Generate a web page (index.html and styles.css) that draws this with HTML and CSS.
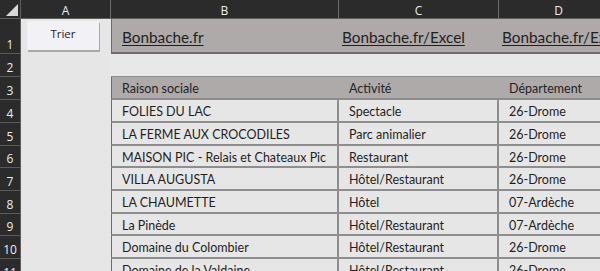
FILE: index.html
```html
<!DOCTYPE html>
<html lang="fr">
<head>
<meta charset="utf-8">
<title>Bonbache</title>
<link rel="stylesheet" href="styles.css">
</head>
<body>
<div class="sheet">
  <div class="corner"><span class="tri"></span></div>
  <div class="colhead">A</div>
  <div class="colhead">B</div>
  <div class="colhead">C</div>
  <div class="colhead">D</div>

  <div class="rowhead r1">1</div>
  <div class="cell-a r1"><button class="btn">Trier</button></div>
  <div class="link first"><span>Bonbache.fr</span></div>
  <div class="link"><span>Bonbache.fr/Excel</span></div>
  <div class="link last"><span>Bonbache.fr/Excel</span></div>

  <div class="rowhead">2</div>
  <div class="cell-a"></div>
  <div class="blank first"></div>
  <div class="blank"></div>
  <div class="blank"></div>

  <div class="rowhead">3</div>
  <div class="cell-a"></div>
  <div class="th first">Raison sociale</div>
  <div class="th">Activité</div>
  <div class="th">Département</div>

  <div class="rowhead">4</div>
  <div class="cell-a"></div>
  <div class="td first">FOLIES DU LAC</div>
  <div class="td">Spectacle</div>
  <div class="td">26-Drome</div>

  <div class="rowhead">5</div>
  <div class="cell-a"></div>
  <div class="td first">LA FERME AUX CROCODILES</div>
  <div class="td">Parc animalier</div>
  <div class="td">26-Drome</div>

  <div class="rowhead">6</div>
  <div class="cell-a"></div>
  <div class="td first">MAISON PIC - Relais et Chateaux Pic</div>
  <div class="td">Restaurant</div>
  <div class="td">26-Drome</div>

  <div class="rowhead">7</div>
  <div class="cell-a"></div>
  <div class="td first">VILLA AUGUSTA</div>
  <div class="td">Hôtel/Restaurant</div>
  <div class="td">26-Drome</div>

  <div class="rowhead">8</div>
  <div class="cell-a"></div>
  <div class="td first">LA CHAUMETTE</div>
  <div class="td">Hôtel</div>
  <div class="td">07-Ardèche</div>

  <div class="rowhead">9</div>
  <div class="cell-a"></div>
  <div class="td first">La Pinède</div>
  <div class="td">Hôtel/Restaurant</div>
  <div class="td">07-Ardèche</div>

  <div class="rowhead">10</div>
  <div class="cell-a"></div>
  <div class="td first">Domaine du Colombier</div>
  <div class="td">Hôtel/Restaurant</div>
  <div class="td">26-Drome</div>

  <div class="rowhead">11</div>
  <div class="cell-a"></div>
  <div class="td first">Domaine de la Valdaine</div>
  <div class="td">Hôtel/Restaurant</div>
  <div class="td">26-Drome</div>
</div>
</body>
</html>
```

FILE: styles.css
```css
* { box-sizing: border-box; }
html, body { margin: 0; padding: 0; background: #e7e6e6; overflow: hidden; }
body { width: 600px; height: 271px; font-family: Lato, "Open Sans", sans-serif; }

.sheet {
  display: grid;
  grid-template-columns: 21px 90px 228px 160px 120px;
  grid-template-rows: 19px 35px 23px 23px 23px 23px 22px 23px 23px 22px 23px 23px;
  width: 619px;
}

.corner {
  background: #2b2b2b;
  border-right: 1px solid #5e5e5e;
  border-bottom: 1px solid #5e5e5e;
  position: relative;
}
.tri {
  position: absolute;
  right: 2px;
  bottom: 2px;
  width: 0; height: 0;
  border-left: 12px solid transparent;
  border-bottom: 12px solid #d9d9d9;
}

.colhead {
  background: #2b2b2b;
  color: #ececec;
  font-family: "Open Sans", sans-serif;
  font-size: 12px;
  display: flex;
  align-items: center;
  justify-content: center;
  border-right: 1px solid #6a6a6a;
  border-bottom: 1px solid #5e5e5e;
  padding-top: 3px;
}

.rowhead {
  background: #2b2b2b;
  color: #ececec;
  font-family: "Open Sans", sans-serif;
  font-size: 12px;
  line-height: 12px;
  display: flex;
  align-items: flex-end;
  justify-content: center;
  padding-bottom: 2px;
  border-bottom: 1px solid #5a5a5a;
  border-right: 1px solid #5e5e5e;
}

.cell-a { background: #e7e6e6; }
.cell-a.r1 { padding: 2px 12px 4px 6px; }

.btn {
  width: 100%;
  height: 100%;
  margin: 0;
  border: none;
  background: #f2f2f6;
  box-shadow: 1px 2px 0 #a9a9a9;
  font-family: "Open Sans", sans-serif;
  font-size: 11.5px;
  color: #1d1d1d;
  padding: 0 0 4px 0;
}

.link {
  background: #aeaaaa;
  border-bottom: 2px solid #6e6c6c;
  font-size: 15.3px;
  color: #1f1f1f;
  display: flex;
  align-items: flex-end;
  padding: 0 0 6px 3px;
  white-space: nowrap;
  overflow: hidden;
}
.link span { text-decoration: underline; text-underline-offset: 2px; }
.link.first { border-left: 1px solid #6e6c6c; padding-left: 10px; }

.blank {
  background: #e8e8e8;
  border-bottom: 1px solid #8f8d8d;
}

.th {
  background: #aeaaaa;
  font-size: 12.5px;
  color: #232323;
  display: flex;
  align-items: center;
  padding: 2px 0 0 10px;
  border-bottom: 2px solid #8c8a8a;
  white-space: nowrap;
  overflow: hidden;
}
.th.first { border-left: 1px solid #6e6c6c; }

.td {
  background: #e7e6e6;
  font-size: 12.5px;
  color: #1f1f1f;
  display: flex;
  align-items: center;
  padding: 2px 0 0 10px;
  border-bottom: 2px solid #8e8e8e;
  border-right: 2px solid #8e8e8e;
  white-space: nowrap;
  overflow: hidden;
}
.td.first { border-left: 1px solid #6e6c6c; }
```
